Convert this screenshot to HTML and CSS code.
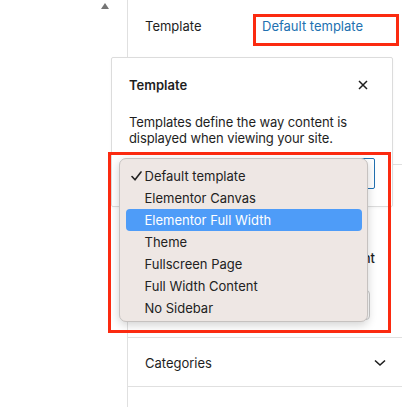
FILE: index.html
```html
<!DOCTYPE html>
<html>
<head>
<meta charset="utf-8">
<link rel="stylesheet" href="styles.css">
</head>
<body>
<div class="page">
  <div class="gutter"><span class="tri"></span></div>
  <div class="sidebar">
    <div class="row-template">
      <span class="label">Template</span>
      <a class="link">Default template</a>
    </div>
    <div class="section-mid">
      <div class="mid-label">Parent</div>
      <div class="mid-box"></div>
    </div>
    <div class="row-cat">
      <span class="label">Categories</span>
      <svg class="chev" width="12" height="8" viewBox="0 0 12 8"><path d="M1 1.5 L6 6 L11 1.5" fill="none" stroke="#1e1e1e" stroke-width="1.6"/></svg>
    </div>
  </div>
</div>

<div class="popover">
  <div class="pop-head">
    <span class="pop-title">Template</span>
    <svg class="pop-close" width="10" height="10" viewBox="0 0 10 10"><path d="M1 1 L9 9 M9 1 L1 9" stroke="#1e1e1e" stroke-width="1.5"/></svg>
  </div>
  <p class="pop-desc">Templates define the way content is displayed when viewing your site.</p>
  <div class="pop-select"></div>
</div>

<div class="menu">
  <div class="item"><span class="check"><svg width="11" height="10" viewBox="0 0 11 10"><path d="M1 5.5 L4 8.8 L10 1" fill="none" stroke="#222" stroke-width="1.6" stroke-linecap="round" stroke-linejoin="round"/></svg></span>Default template</div>
  <div class="item"><span class="check"></span>Elementor Canvas</div>
  <div class="item active"><span class="check"></span>Elementor Full Width</div>
  <div class="item"><span class="check"></span>Theme</div>
  <div class="item"><span class="check"></span>Fullscreen Page</div>
  <div class="item"><span class="check"></span>Full Width Content</div>
  <div class="item"><span class="check"></span>No Sidebar</div>
</div>

<div class="mark mark-1"></div>
<div class="mark mark-2"></div>
</body>
</html>
```

FILE: styles.css
```css
html, body {
  margin: 0;
  padding: 0;
  background: #fff;
}
body {
  font-family: Inter, "Liberation Sans", sans-serif;
  font-size: 13px;
  color: #1e1e1e;
  width: 402px;
  height: 407px;
  overflow: hidden;
  position: relative;
}
.page {
  display: flex;
  height: 407px;
}
.gutter {
  width: 127px;
  border-right: 1px solid #e0e0e0;
  position: relative;
}
.tri {
  position: absolute;
  left: 101px;
  top: 3px;
  width: 0;
  height: 0;
  border-left: 4px solid transparent;
  border-right: 4px solid transparent;
  border-bottom: 6px solid #757575;
}
.sidebar {
  flex: 1;
  display: flex;
  flex-direction: column;
}
.row-template {
  height: 165px;
  box-sizing: border-box;
  border-bottom: 1px solid #e0e0e0;
  padding: 17px 0 0 17px;
  display: flex;
  align-items: flex-start;
  line-height: 18px;
}
.label {
  width: 117px;
}
.link {
  color: #2271b1;
}
.section-mid {
  height: 172px;
  box-sizing: border-box;
  display: flex;
  flex-direction: column;
  align-items: flex-end;
  padding: 84px 27px 0 17px;
}
.mid-label {
  line-height: 18px;
  font-weight: 500;
}
.mid-box {
  margin-top: 23px;
  margin-right: 5px;
  width: 225px;
  height: 30px;
  box-sizing: border-box;
  border: 1px solid #c9c9c9;
  border-radius: 4px;
}
.row-cat {
  height: 50px;
  box-sizing: border-box;
  border-top: 1px solid #e0e0e0;
  border-bottom: 1px solid #e0e0e0;
  display: flex;
  align-items: center;
  justify-content: space-between;
  padding: 1px 16px 0 17px;
}
.chev {
  display: block;
}

.popover {
  position: absolute;
  left: 111px;
  top: 57px;
  width: 282px;
  height: 150px;
  box-sizing: border-box;
  background: #fff;
  border: 1px solid #dcdcdc;
  border-radius: 2px;
  box-shadow: 0 1px 3px rgba(0,0,0,0.04);
  padding: 16px 17px 0 17px;
}
.pop-head {
  display: flex;
  justify-content: space-between;
  align-items: center;
  height: 22px;
}
.pop-title {
  font-weight: 600;
}
.pop-close {
  margin-right: 7px;
  display: block;
}
.pop-desc {
  margin: 18px 0 0 0;
  line-height: 16px;
  letter-spacing: -0.1px;
}
.pop-select {
  margin-top: 12px;
  width: 246px;
  height: 31px;
  box-sizing: border-box;
  border: 1.5px solid #2271b1;
  border-radius: 2px;
}

.menu {
  position: absolute;
  left: 119px;
  top: 158px;
  width: 249px;
  height: 164px;
  box-sizing: border-box;
  background: #eee7e4;
  border: 0.5px solid #c6c2c0;
  border-radius: 7px;
  box-shadow: 0 3px 10px rgba(0,0,0,0.18);
  padding: 6px 5px 4px 6px;
}
.item {
  height: 22px;
  line-height: 22px;
  display: flex;
  align-items: center;
  border-radius: 4px;
  color: #222;
}
.item.active {
  background: #4e9cf8;
  color: #fff;
}
.check {
  width: 13.5px;
  padding-left: 5px;
  box-sizing: content-box;
  display: flex;
  align-items: center;
  height: 22px;
}
.check svg {
  display: block;
}

.mark {
  position: absolute;
  box-sizing: border-box;
  border: 3px solid #fb2a10;
}
.mark-1 {
  left: 253px;
  top: 14px;
  width: 146px;
  height: 32px;
}
.mark-2 {
  left: 108px;
  top: 152px;
  width: 283px;
  height: 181px;
}
```
